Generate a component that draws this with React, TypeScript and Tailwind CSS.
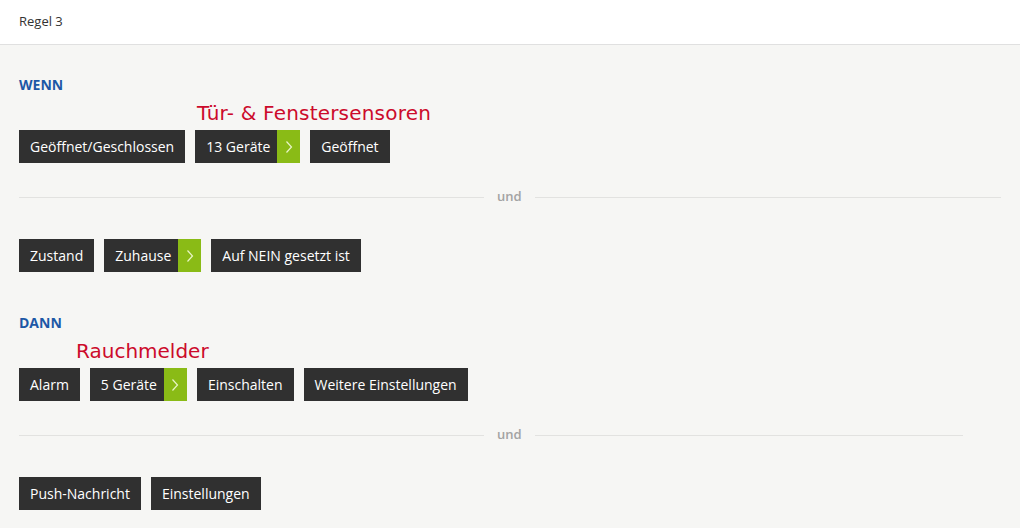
import React from "react";

type Chip = { label: string; arrow?: boolean };

function Chevron() {
	return (
		<svg width="8" height="14" viewBox="0 0 8 14" fill="none">
			<path d="M1.5 1.5 L6.5 7 L1.5 12.5" stroke="#e9f5c8" strokeWidth="1.2" />
		</svg>
	);
}

function ChipRow({ items }: { items: Chip[] }) {
	return (
		<div className="flex gap-[10px]">
			{items.map((c) => (
				<div key={c.label} className="flex h-[33px] bg-[#303030] text-white text-[14px]">
					<span className={c.arrow ? "flex items-center pl-[11px] pr-[7px]" : "flex items-center px-[11px]"}>
						{c.label}
					</span>
					{c.arrow && (
						<span className="flex items-center justify-center w-[23px] bg-[#8abb16]">
							<Chevron />
						</span>
					)}
				</div>
			))}
		</div>
	);
}

function Divider({ right }: { right: string }) {
	return (
		<div className="flex items-center" style={{ width: right }}>
			<div className="h-px w-[465px] bg-[#e2e2e0]" />
			<span className="px-[13px] text-[13px] font-semibold text-[#a3a3a3]">und</span>
			<div className="h-px flex-1 bg-[#e2e2e0]" />
		</div>
	);
}

export default function App() {
	return (
		<div className="w-[1020px] h-[528px] bg-[#f6f6f4] font-['Open_Sans',sans-serif] overflow-hidden">
			<header className="h-[45px] bg-white border-b border-[#e0e0e0] flex items-center px-[19px]">
				<span className="text-[13px] text-[#333]">Regel 3</span>
			</header>
			<main className="px-[19px] pt-[30px]">
				<h2 className="text-[14px] font-bold text-[#1d58a6] leading-[20px]">WENN</h2>
				<div className="h-[35px] pl-[178px] flex items-center">
					<span className="text-[20px] text-[#cc0a2b] font-['DejaVu_Sans',sans-serif] tracking-[0.2px]">
						Tür- &amp; Fenstersensoren
					</span>
				</div>
				<ChipRow
					items={[
						{ label: "Geöffnet/Geschlossen" },
						{ label: "13 Geräte", arrow: true },
						{ label: "Geöffnet" },
					]}
				/>
				<div className="h-[68px] flex items-center">
					<Divider right="984px" />
				</div>
				<div className="mt-[8px]">
					<ChipRow
						items={[
							{ label: "Zustand" },
							{ label: "Zuhause", arrow: true },
							{ label: "Auf NEIN gesetzt ist" },
						]}
					/>
				</div>
				<h2 className="mt-[41px] text-[14px] font-bold text-[#1d58a6] leading-[20px]">DANN</h2>
				<div className="h-[35px] pl-[57px] flex items-center">
					<span className="text-[20px] text-[#cc0a2b] font-['DejaVu_Sans',sans-serif]">Rauchmelder</span>
				</div>
				<ChipRow
					items={[
						{ label: "Alarm" },
						{ label: "5 Geräte", arrow: true },
						{ label: "Einschalten" },
						{ label: "Weitere Einstellungen" },
					]}
				/>
				<div className="h-[68px] flex items-center">
					<Divider right="944px" />
				</div>
				<div className="mt-[8px]">
					<ChipRow items={[{ label: "Push-Nachricht" }, { label: "Einstellungen" }]} />
				</div>
			</main>
		</div>
	);
}
